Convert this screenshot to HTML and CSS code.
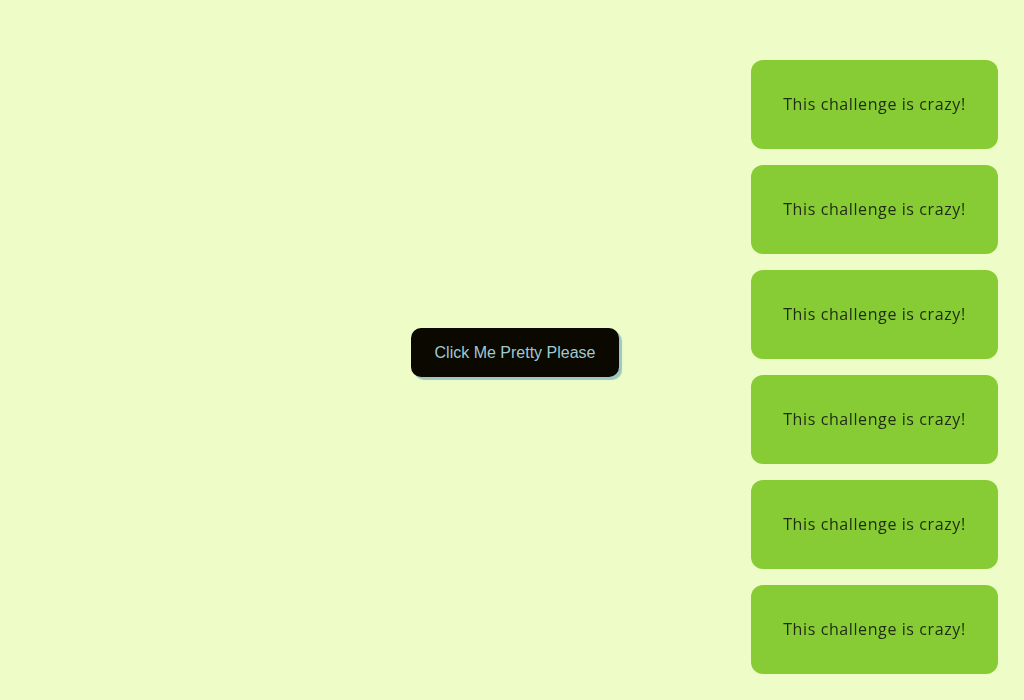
FILE: index.html
```html
<!DOCTYPE html>
<html lang="en">
<head>
<meta charset="utf-8">
<title>Toasts</title>
<link rel="stylesheet" href="styles.css">
</head>
<body>
<main class="stage">
  <button class="cta" type="button">Click Me Pretty Please</button>
</main>
<ul class="toasts">
  <li class="toast">This challenge is crazy!</li>
  <li class="toast">This challenge is crazy!</li>
  <li class="toast">This challenge is crazy!</li>
  <li class="toast">This challenge is crazy!</li>
  <li class="toast">This challenge is crazy!</li>
  <li class="toast">This challenge is crazy!</li>
</ul>
</body>
</html>
```
FILE: styles.css
```css
html, body {
  margin: 0;
  padding: 0;
  height: 100%;
}
body {
  background: #eefdc8;
  overflow: hidden;
}
.stage {
  height: 100%;
  display: flex;
  align-items: center;
  justify-content: center;
}
.cta {
  margin: 5px 0 0 6px;
  width: 208px;
  height: 49px;
  border: none;
  border-radius: 10px;
  background: #0b0800;
  color: #9fc9d2;
  font-family: "Liberation Sans", Arial, sans-serif;
  font-size: 16px;
  box-shadow: 3px 3px 1px #9fc7bd;
  cursor: pointer;
}
.toasts {
  position: fixed;
  top: 60px;
  right: 26px;
  margin: 0;
  padding: 0;
  list-style: none;
  display: flex;
  flex-direction: column;
  gap: 16px;
}
.toast {
  width: 247px;
  height: 89px;
  box-sizing: border-box;
  padding-bottom: 1px;
  border-radius: 12px;
  background: #87cc34;
  color: #1f2b12;
  font-family: "Open Sans", "Noto Sans", sans-serif;
  font-size: 16px;
  letter-spacing: 0.6px;
  display: flex;
  align-items: center;
  justify-content: center;
}
```
